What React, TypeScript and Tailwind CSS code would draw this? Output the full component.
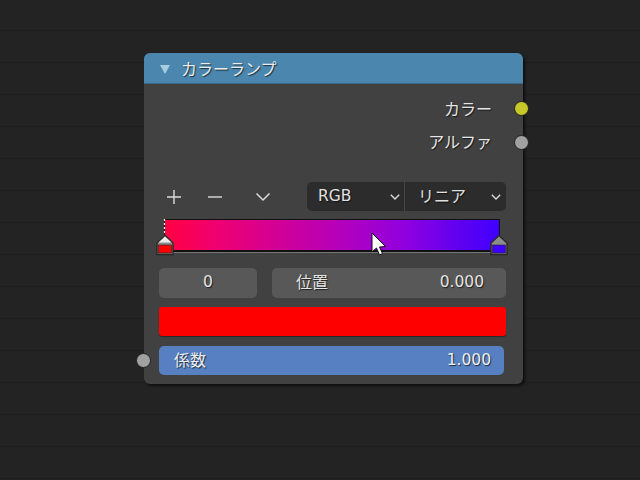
const font = "font-['DejaVu_Sans','Noto_Sans_CJK_JP',sans-serif]";
const shadow = "[text-shadow:1px_1px_1px_rgba(0,0,0,0.65)]";

function Chevron() {
  return (
    <svg width="10" height="6" viewBox="0 0 10 6" fill="none">
      <path d="M0.8 0.8 L5 5 L9.2 0.8" stroke="#dcdcdc" strokeWidth="1.4" />
    </svg>
  );
}

function Marker({ fill, active }: { fill: string; active?: boolean }) {
  return (
    <svg width="18" height="37" viewBox="0 0 18 37" className="block">
      {active && <path d="M8.5 0 V17" stroke="#fff" strokeWidth="1.2" strokeDasharray="2 2" />}
      <path d="M1 35.5 V24 L9 16.5 L17 24 V35.5 Z" fill="#8c8c8c" stroke="#2a2a2a" strokeWidth="1.5" />
      {active && <path d="M2.5 23.5 L9 17.5 L15.5 23.5 Z" fill="#ececec" />}
      <rect x="2.5" y="26" width="13" height="8" fill={fill} stroke="#222" strokeWidth="0.6" />
    </svg>
  );
}

export default function App() {
  return (
    <div className={`relative h-[480px] w-[640px] overflow-hidden bg-[#232323] bg-[repeating-linear-gradient(180deg,transparent_0px,transparent_30px,#1d1d1d_30px,#1d1d1d_31px,transparent_31px,transparent_32px)] pt-[53px] pl-[144px] ${font}`}>
      <div className="relative flex h-[331px] w-[379px] flex-col rounded-[6px] bg-[#414141] shadow-[2px_2px_3px_rgba(0,0,0,0.6)]">
        <div className={`flex h-[31px] items-center gap-[11px] rounded-t-[6px] border-b border-[#3c6a8a] bg-[#4a86ad] pl-[16px] pt-[3px] text-[16px] text-[#ececec] ${shadow}`}>
          <svg width="10" height="9" viewBox="0 0 10 9"><path d="M0 0 H10 L5 9 Z" fill="#a9cbe0" /></svg>
          <span>カラーランプ</span>
        </div>

        <div className={`flex h-[34px] items-center justify-end pr-[31px] pt-[17px] text-[16px] text-[#e6e6e6] ${shadow}`}>カラー</div>
        <div className={`flex h-[34px] items-center justify-end pr-[31px] pt-[15px] text-[16px] text-[#e6e6e6] ${shadow}`}>アルファ</div>

        <div className="mt-[30px] flex h-[29px] items-center pl-[22px]">
          <svg width="16" height="16" viewBox="0 0 16 16" className="mr-[25px]"><path d="M8 1 V15 M1 8 H15" stroke="#dcdcdc" strokeWidth="1.4" /></svg>
          <svg width="16" height="16" viewBox="0 0 16 16" className="mr-[32px]"><path d="M1 8 H15" stroke="#dcdcdc" strokeWidth="1.4" /></svg>
          <svg width="16" height="10" viewBox="0 0 16 10" fill="none" className="mr-[36px]"><path d="M1.5 1.5 L8 8 L14.5 1.5" stroke="#dcdcdc" strokeWidth="1.5" /></svg>
          <div className={`flex h-[29px] w-[98px] items-center justify-between rounded-l-[5px] border-r border-[#444] bg-[#2c2c2c] pl-[11px] pr-[4px] text-[15.5px] text-[#e0e0e0] ${shadow}`}>
            <span>RGB</span><Chevron />
          </div>
          <div className={`flex h-[29px] w-[101px] items-center justify-between rounded-r-[5px] bg-[#2c2c2c] pl-[13px] pr-[5px] text-[16px] text-[#e0e0e0] ${shadow}`}>
            <span>リニア</span><Chevron />
          </div>
        </div>

        <div className="relative ml-[20px] mt-[8px] h-[33px] w-[336px] border-[1.5px] border-b-[2px] border-[#111] bg-[linear-gradient(90deg,#ff0040_0%,#f00070_15%,#d00098_35%,#b000c0_55%,#9000e0_72%,#6000f0_88%,#4000ff_100%)] shadow-[0_1px_0_#777]">
          <div className="absolute -left-[9px] -top-[1px]"><Marker fill="#ff0000" active /></div>
          <div className="absolute -right-[9px] -top-[1px]"><Marker fill="#4000ff" /></div>
        </div>

        <div className="mt-[16px] flex h-[30px] pl-[15px] pr-[17px]">
          <div className={`flex w-[98px] items-center justify-center rounded-[5px] bg-[#585858] text-[15.5px] text-[#e4e4e4] ${shadow}`}>0</div>
          <div className={`ml-[15px] flex flex-1 items-center justify-between rounded-[5px] bg-[#585858] pl-[24px] pr-[22px] text-[15.5px] text-[#e4e4e4] ${shadow}`}>
            <span className="text-[16px]">位置</span><span>0.000</span>
          </div>
        </div>

        <div className="ml-[15px] mt-[9px] h-[29px] w-[347px] rounded-[3px] bg-[#ff0000] shadow-[0_1px_1px_rgba(0,0,0,0.4)]" />

        <div className={`ml-[15px] mt-[10px] flex h-[29px] w-[345px] items-center justify-between rounded-[5px] bg-[#5680c2] pl-[15px] pr-[13px] text-[15.5px] text-[#eeeeee] ${shadow}`}>
          <span className="text-[16px]">係数</span><span>1.000</span>
        </div>

        <div className="absolute left-[370px] top-[48px] h-[15px] w-[15px] rounded-full border border-[#1f1f1f] bg-[#c7c729]" />
        <div className="absolute left-[370px] top-[82px] h-[15px] w-[15px] rounded-full border border-[#1f1f1f] bg-[#a1a1a1]" />
        <div className="absolute -left-[8px] top-[300px] h-[15px] w-[15px] rounded-full border border-[#1f1f1f] bg-[#a1a1a1]" />

        <svg width="18" height="26" viewBox="0 0 18 26" className="absolute left-[227px] top-[179px]">
          <path d="M1 1 V20 L5.5 16 L8.5 23 L11.5 21.5 L8.5 15 L14.5 14.5 Z" fill="#fff" stroke="#111" strokeWidth="1" />
        </svg>
      </div>
    </div>
  );
}
